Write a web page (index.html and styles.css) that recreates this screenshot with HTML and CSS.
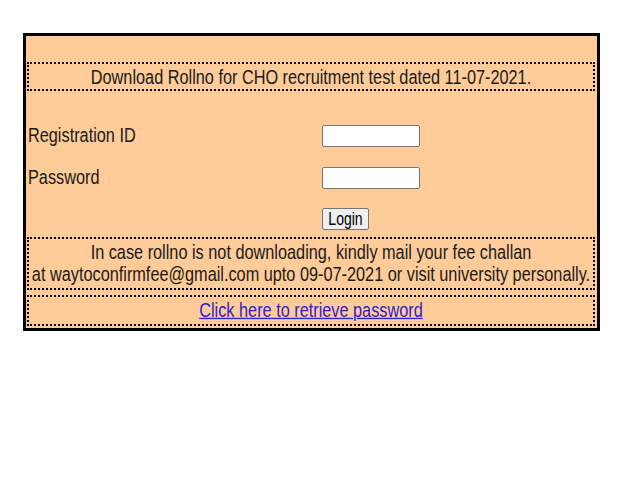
FILE: index.html
```html
<!DOCTYPE html>
<html>
<head>
<meta charset="utf-8">
<title>Download Rollno</title>
<link rel="stylesheet" href="styles.css">
</head>
<body>
<div class="panel">
  <div class="box box-title"><span class="tall">Download Rollno for CHO recruitment test dated 11-07-2021.</span></div>
  <form class="form">
    <label class="label" for="rid"><span class="tall">Registration ID</span></label>
    <div class="field"><input id="rid" class="input" type="text"></div>
    <label class="label" for="pwd"><span class="tall">Password</span></label>
    <div class="field"><input id="pwd" class="input" type="password"></div>
    <div class="label"></div>
    <div class="field"><button class="btn" type="button"><span class="tall">Login</span></button></div>
  </form>
  <div class="box box-note"><span class="tall">In case rollno is not downloading, kindly mail your fee challan</span><br><span class="tall">at waytoconfirmfee@gmail.com upto 09-07-2021 or visit university personally.</span></div>
  <div class="box box-link"><a class="link" href="#"><span class="tall link-text">Click here to retrieve password</span></a></div>
</div>
</body>
</html>
```

FILE: styles.css
```css
html, body {
  margin: 0;
  padding: 0;
  background: #ffffff;
}
body {
  font-family: "Liberation Sans", Arial, sans-serif;
  font-size: 16.3px;
  color: #1a1a1a;
}
.tall {
  display: inline-block;
  transform: scaleY(1.28);
  white-space: nowrap;
}
.panel {
  box-sizing: border-box;
  width: 577px;
  margin: 33px 0 0 23px;
  border: 3px solid #000;
  background: #ffcc99;
  padding: 26px 2px 2px 1px;
}
.box {
  border: 2px dotted #000;
  text-align: center;
  white-space: nowrap;
}
.box-title {
  height: 25px;
  line-height: 25px;
}
.form {
  display: grid;
  grid-template-columns: 295px 1fr;
  grid-auto-rows: 22px;
  row-gap: 20px;
  align-items: center;
  margin: 34px 0 6px 0;
}
.form > :nth-child(5), .form > :nth-child(6) { margin-top: -2px; }
.label {
  padding-left: 1px;
  line-height: 22px;
}
.label .tall {
  transform: translateY(-2px) scaleY(1.28);
}
.field {
  display: flex;
  align-items: center;
  height: 22px;
}
.input {
  box-sizing: border-box;
  width: 98px;
  height: 22px;
  margin: 0;
  border: 1px solid #767676;
  border-radius: 2px;
  background: #fff;
  padding: 1px 2px;
}
.btn {
  box-sizing: border-box;
  width: 47px;
  height: 22px;
  margin: 0;
  padding: 0;
  border: 1px solid #767676;
  border-radius: 2px;
  background: #efefef;
  font-family: "Liberation Sans", Arial, sans-serif;
  font-size: 14px;
  line-height: 18px;
  color: #000;
}
.box-note {
  padding: 2px 0 3px;
  line-height: 22px;
}
.box-note .tall {
  transform: translateY(-1px) scaleY(1.28);
}
.box-link {
  margin-top: 5px;
  height: 27px;
  line-height: 27px;
}
.link {
  color: #2a1fcc;
  text-decoration: underline;
}
.link-text {
  text-decoration: underline;
  transform: translateY(-1px) scaleY(1.28);
}
```
